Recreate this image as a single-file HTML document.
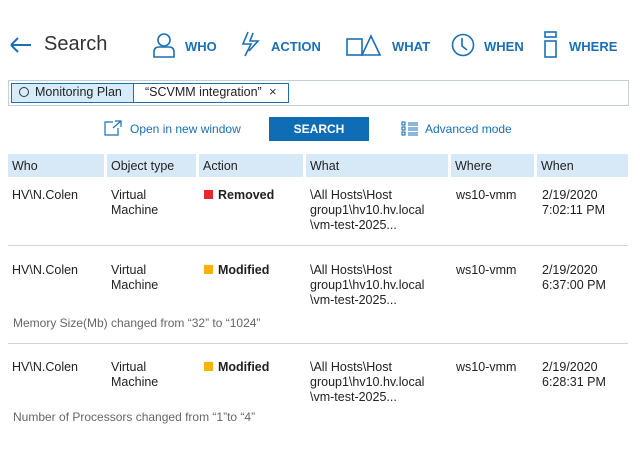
<!DOCTYPE html>
<html><head><style>
*{margin:0;padding:0;box-sizing:border-box}
body{width:640px;height:450px;background:#fff;font-family:"Liberation Sans",sans-serif;color:#222;position:relative;overflow:hidden}
.a{position:absolute;white-space:nowrap}
.nav{color:#1a6fb5;font-size:13px;font-weight:bold}
.hd{position:absolute;top:154px;height:23px;background:#d7e9f6;font-size:12.5px;padding:5px 0 0 4px;color:#222}
.c{position:absolute;font-size:12.5px;line-height:15px}
.ln{position:absolute;left:8px;width:620px;height:1px;background:#d4d4d4}
.note{position:absolute;left:13px;font-size:12px;color:#666}
.sq{display:inline-block;width:9px;height:9px;margin-right:5px;vertical-align:0}
</style></head><body>
<svg class="a" style="left:9px;top:36px" width="24" height="18"><path d="M2 9H22M2 9L9 2M2 9L9 16" stroke="#1a6fb5" stroke-width="2" fill="none"/></svg>
<div class="a" style="left:44px;top:33px;font-size:20px;color:#333">Search</div>
<svg class="a" style="left:152px;top:32px" width="24" height="26"><circle cx="12" cy="8" r="6" stroke="#1a6fb5" stroke-width="1.6" fill="none"/><path d="M2 25V20Q2 15 7 15H17Q22 15 22 20V25Z" stroke="#1a6fb5" stroke-width="1.6" fill="none"/></svg>
<div class="a nav" style="left:185px;top:39px">WHO</div>
<svg class="a" style="left:240px;top:31px" width="20" height="26"><path d="M8 1L3 13H11L5 25M13 2L10 10H18L9 20" stroke="#1a6fb5" stroke-width="1.6" fill="none"/></svg>
<div class="a nav" style="left:271px;top:39px">ACTION</div>
<svg class="a" style="left:346px;top:34px" width="36" height="22"><rect x="1" y="5" width="15" height="16" stroke="#1a6fb5" stroke-width="1.6" fill="none"/><path d="M16 21L25 2L34 21Z" stroke="#1a6fb5" stroke-width="1.6" fill="none"/></svg>
<div class="a nav" style="left:392px;top:39px">WHAT</div>
<svg class="a" style="left:451px;top:33px" width="24" height="24"><circle cx="12" cy="12" r="10.5" stroke="#1a6fb5" stroke-width="1.6" fill="none"/><path d="M11 5V13L16 17" stroke="#1a6fb5" stroke-width="1.6" fill="none"/></svg>
<div class="a nav" style="left:484px;top:39px">WHEN</div>
<svg class="a" style="left:544px;top:31px" width="14" height="27"><rect x="1" y="1" width="11" height="5" stroke="#1a6fb5" stroke-width="1.6" fill="none"/><rect x="1" y="10" width="11" height="16" stroke="#1a6fb5" stroke-width="1.6" fill="none"/></svg>
<div class="a nav" style="left:569px;top:39px">WHERE</div>

<div class="a" style="left:8px;top:80px;width:621px;height:26px;border:1px solid #c4cfd8"></div>
<div class="a" style="left:11px;top:83px;width:278px;height:20px;border:1px solid #1a6fb5"></div>
<div class="a" style="left:12px;top:84px;width:122px;height:18px;background:#d7ecfa;border-right:1px solid #1a6fb5"></div>
<div class="a" style="left:19px;top:87px;width:10px;height:10px;border:1px solid #333;border-radius:50%"></div>
<div class="a" style="left:35px;top:85px;font-size:12.5px">Monitoring Plan</div>
<div class="a" style="left:145px;top:85px;font-size:12.5px">“SCVMM integration”</div>
<div class="a" style="left:269px;top:84px;font-size:13px;color:#333">×</div>

<svg class="a" style="left:104px;top:120px" width="18" height="16"><path d="M9 2H1V15H14V8M9 8L17 1M11 1H17V7" stroke="#1a6fb5" stroke-width="1.2" fill="none"/></svg>
<div class="a" style="left:130px;top:122px;font-size:12px;color:#1a6fb5">Open in new window</div>
<div class="a" style="left:269px;top:117px;width:100px;height:24px;background:#0f6db5;color:#fff;font-size:12px;font-weight:bold;text-align:center;line-height:24px">SEARCH</div>
<svg class="a" style="left:401px;top:121px" width="18" height="15"><g stroke="#1a6fb5" stroke-width="1.1" fill="none"><rect x="1" y="1" width="3" height="3"/><rect x="1" y="6" width="3" height="3"/><rect x="1" y="11" width="3" height="3"/><path d="M7 2H17M7 4H17M7 7H17M7 9H17M7 12H17M7 14H17"/></g></svg>
<div class="a" style="left:425px;top:122px;font-size:12px;color:#1a6fb5">Advanced mode</div>

<div class="hd" style="left:8px;width:96px">Who</div>
<div class="hd" style="left:107px;width:89px">Object type</div>
<div class="hd" style="left:199px;width:104px">Action</div>
<div class="hd" style="left:306px;width:142px">What</div>
<div class="hd" style="left:451px;width:83px">Where</div>
<div class="hd" style="left:537px;width:91px">When</div>

<div class="c" style="left:12px;top:188px">HV\N.Colen</div>
<div class="c" style="left:111px;top:188px">Virtual<br>Machine</div>
<div class="c" style="left:204px;top:188px;font-weight:bold"><span class="sq" style="background:#e8262c"></span>Removed</div>
<div class="c" style="left:310px;top:188px">\All Hosts\Host<br>group1\hv10.hv.local<br>\vm-test-2025...</div>
<div class="c" style="left:456px;top:188px">ws10-vmm</div>
<div class="c" style="left:542px;top:188px">2/19/2020<br>7:02:11 PM</div>
<div class="ln" style="top:245px"></div>

<div class="c" style="left:12px;top:263px">HV\N.Colen</div>
<div class="c" style="left:111px;top:263px">Virtual<br>Machine</div>
<div class="c" style="left:204px;top:263px;font-weight:bold"><span class="sq" style="background:#f5b400"></span>Modified</div>
<div class="c" style="left:310px;top:263px">\All Hosts\Host<br>group1\hv10.hv.local<br>\vm-test-2025...</div>
<div class="c" style="left:456px;top:263px">ws10-vmm</div>
<div class="c" style="left:542px;top:263px">2/19/2020<br>6:37:00 PM</div>
<div class="note" style="top:316px">Memory Size(Mb) changed from “32” to “1024”</div>
<div class="ln" style="top:343px"></div>

<div class="c" style="left:12px;top:360px">HV\N.Colen</div>
<div class="c" style="left:111px;top:360px">Virtual<br>Machine</div>
<div class="c" style="left:204px;top:360px;font-weight:bold"><span class="sq" style="background:#f5b400"></span>Modified</div>
<div class="c" style="left:310px;top:360px">\All Hosts\Host<br>group1\hv10.hv.local<br>\vm-test-2025...</div>
<div class="c" style="left:456px;top:360px">ws10-vmm</div>
<div class="c" style="left:542px;top:360px">2/19/2020<br>6:28:31 PM</div>
<div class="note" style="top:410px">Number of Processors changed from “1”to “4”</div>
</body></html>
